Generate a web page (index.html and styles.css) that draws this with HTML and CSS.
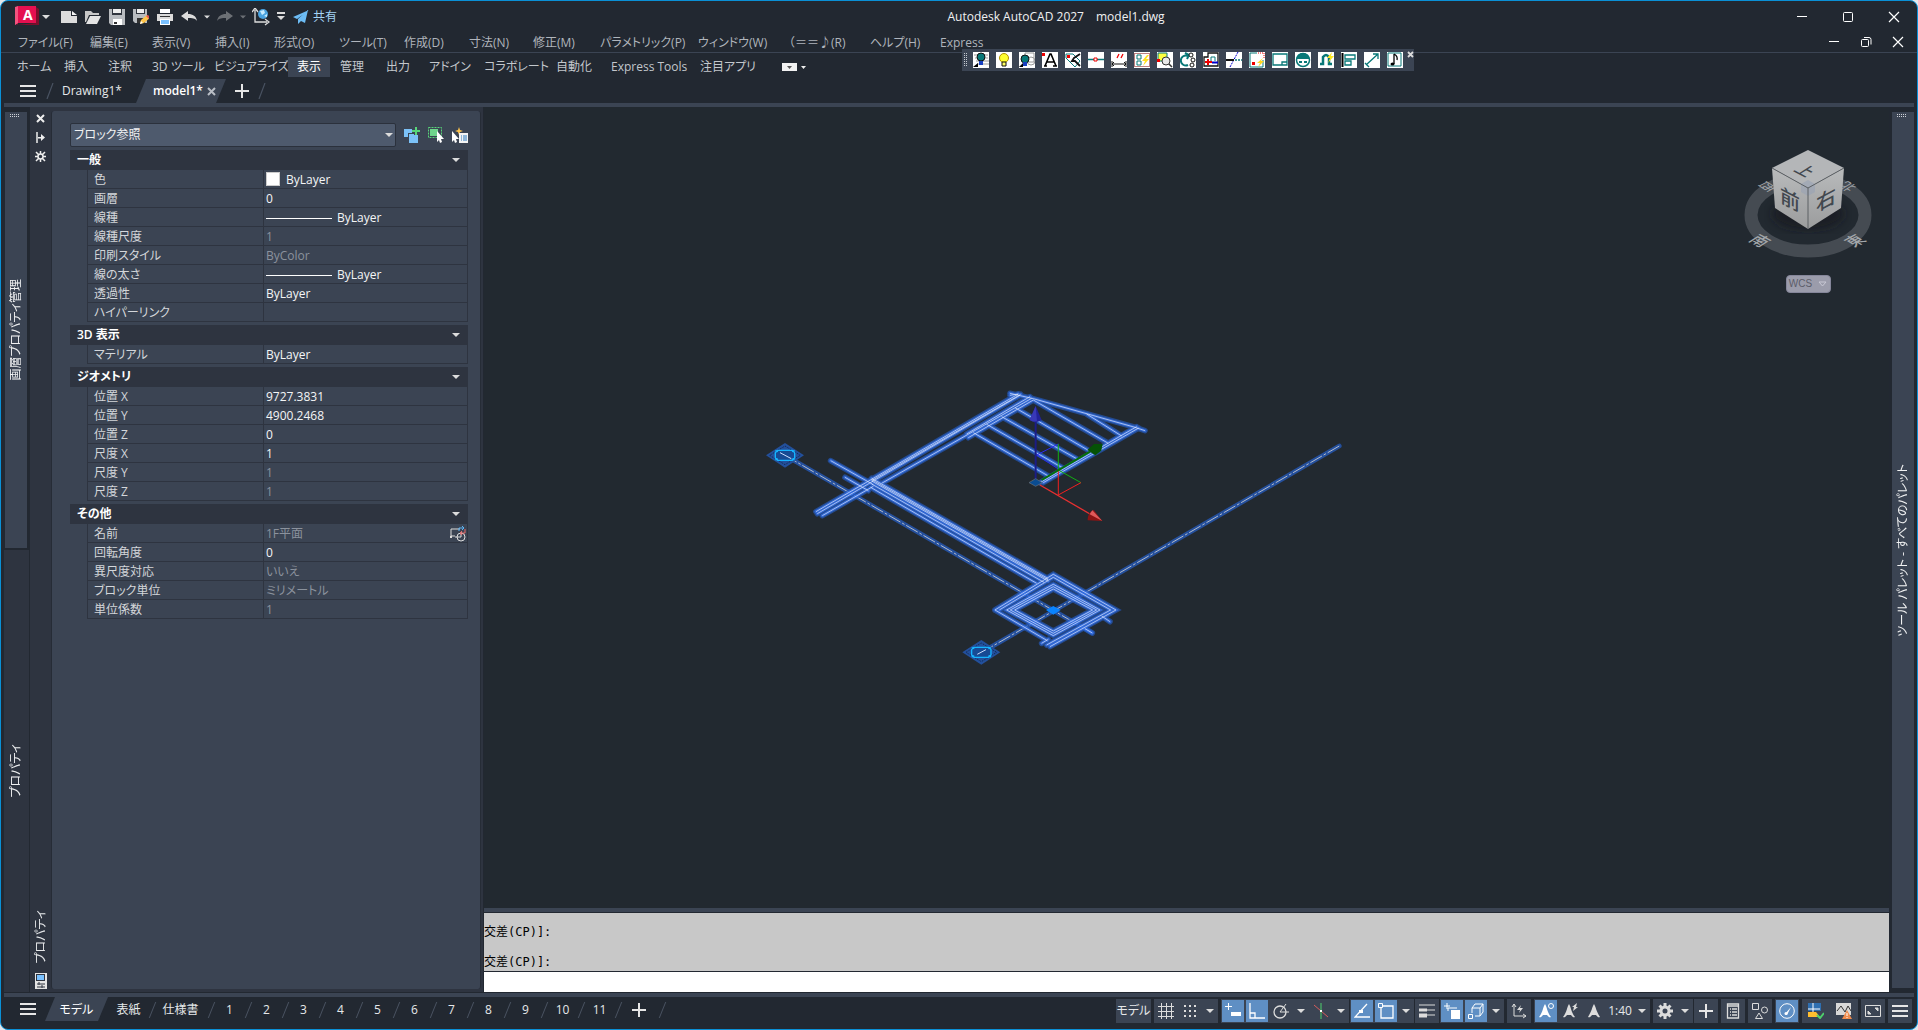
FILE: index.html
```html
<!DOCTYPE html>
<html lang="ja">
<head>
<meta charset="utf-8">
<title>Autodesk AutoCAD 2027 - model1.dwg</title>
<link rel="stylesheet" href="styles.css">
</head>
<body>
<svg class="defs" aria-hidden="true">
  <symbol id="caret" viewBox="0 0 8 8"><path d="M0 2h8L4 6z" fill="#dcdcdc"/></symbol>
  <symbol id="burger" viewBox="0 0 16 16"><path d="M0 3h16M0 8h16M0 13h16" stroke="#e6e6e6" stroke-width="2"/></symbol>
  <symbol id="plus" viewBox="0 0 16 16"><path d="M8 1v14M1 8h14" stroke="#e6e6e6" stroke-width="2"/></symbol>
  <symbol id="slash" viewBox="0 0 8 16"><path d="M1 16L7 0" stroke="#4a5362" stroke-width="1.2"/></symbol>
  <symbol id="close" viewBox="0 0 12 12"><path d="M1 1l10 10M11 1L1 11" stroke="#fff" stroke-width="1.2"/></symbol>
  <symbol id="grip" viewBox="0 0 10 4"><path d="M0 .5h10M0 2.5h10" stroke="#d0d3d8" stroke-dasharray="1 1"/></symbol>
  <symbol id="compass" viewBox="0 0 16 16"><path d="M8 1C6 4 6 8 2 14c2 1 3-1 4-2h4c1 1 2 3 4 2C10 8 10 4 8 1z" fill="#dcdcdc"/></symbol>
</svg>
<div class="app">
  <header class="titlebar">
    <button class="tb logo" aria-label="アプリケーション メニュー"><svg width="24" height="22" viewBox="0 0 24 22"><path d="M0 1L3 4v15l-3-2zM2 19h22v-16l-3-2v16z" fill="#7c0f2c"/><path d="M0 19L3 0h18v17l-3 0H3z" fill="#e51050"/><path d="M0 1l3-1v17l-3 2z" fill="#f2547f"/></svg><b>A</b></button>
    <button class="tb caretbtn first" aria-label="開く"><svg width="8" height="8"><use href="#caret"/></svg></button>
    <button class="tb" aria-label="新規"><svg width="16" height="16" viewBox="0 0 16 16"><path d="M0 2h10v5h6v7H0z" fill="#dcdcdc"/><path d="M11 2l5 4h-5z" fill="#f4f4f4"/></svg></button>
    <button class="tb" aria-label="開く"><svg width="16" height="16" viewBox="0 0 16 16"><path d="M0 2h6l2 2h6v2H4L1 13H0z" fill="#c8c8c8"/><path d="M5 7h11l-4 8H1z" fill="#e4e4e4"/></svg></button>
    <button class="tb" aria-label="上書き保存"><svg width="16" height="16" viewBox="0 0 16 16"><path d="M0 0h16v16H2l-2-2z" fill="#b9bcc0"/><path d="M3 0h10v6H3z" fill="#30353e"/><path d="M4 0h8v4H4z" fill="#eee"/><path d="M4 10h9v6H4z" fill="#fff"/><path d="M5 13h3v2H5z" fill="#333"/></svg></button>
    <button class="tb" aria-label="名前を付けて保存"><svg width="16" height="16" viewBox="0 0 16 16"><path d="M0 0h14v14H2l-2-2z" fill="#b9bcc0"/><path d="M3 0h9v5H3z" fill="#30353e"/><path d="M4 0h7v4H4z" fill="#eee"/><path d="M4 9h8v5H4z" fill="#333"/><path d="M7 15l1-4 6-5 3 3-6 5z" fill="#ffc54a"/><path d="M13 7l2-1 2 2-1 2z" fill="#e25555"/><path d="M7 15l1-3 2 2z" fill="#fff"/></svg></button>
    <button class="tb" aria-label="印刷"><svg width="16" height="16" viewBox="0 0 16 16"><path d="M3 0h10v4H3z" fill="#fff"/><path d="M0 5h16v7H0z" fill="#dcdcdc"/><path d="M3 7h10v1H3z" fill="#333"/><path d="M3 10h10v6H3z" fill="#fff"/><path d="M4 11h8v4H4z" fill="#79c0ff"/></svg></button>
    <button class="tb" aria-label="元に戻す"><svg width="16" height="16" viewBox="0 0 16 16"><path d="M0 7l7-5v3c5 0 8 2 9 7-2-3-5-3-9-3v3z" fill="#dcdcdc"/></svg></button>
    <button class="tb caretbtn" aria-label="履歴"><svg width="6" height="6"><use href="#caret"/></svg></button>
    <button class="tb dim" aria-label="やり直し"><svg width="16" height="16" viewBox="0 0 16 16"><path d="M16 7L9 2v3C4 5 1 7 0 12c2-3 5-3 9-3v3z" fill="#dcdcdc"/></svg></button>
    <button class="tb caretbtn dim" aria-label="やり直し履歴"><svg width="6" height="6"><use href="#caret"/></svg></button>
    <button class="tb" aria-label="UCS"><svg width="18" height="18" viewBox="0 0 18 18"><path d="M3 2v12h12M0 4l3-4 3 4M13 11l4 3-4 3" stroke="#dcdcdc" fill="none" stroke-width="1.3"/><circle cx="11" cy="6" r="5" fill="#4aa3e0"/><path d="M8 3l4-1 1 3-3 2zM12 8l3-2v3z" fill="#c8ecff"/></svg></button>
    <button class="tb caretbtn wide" aria-label="カスタマイズ"><svg width="8" height="9" viewBox="0 0 8 9"><path d="M0 0h8v2H0zM0 4h8L4 8z" fill="#dcdcdc"/></svg></button>
    <button class="tb share"><svg width="16" height="14" viewBox="0 0 16 14"><path d="M16 0L0 7l4 2zM15 0L5 9v5l3-3 4 2z" fill="#6cbcf5"/></svg>共有</button>
    <h1 class="caption"><span>Autodesk AutoCAD 2027</span><span>model1.dwg</span></h1>
    <button class="win" aria-label="最小化"><svg width="12" height="12" viewBox="0 0 12 12"><path d="M1 5.500h10" stroke="#fff"/></svg></button>
    <button class="win" aria-label="最大化"><svg width="12" height="12" viewBox="0 0 12 12"><rect x="1.500" y="1.500" width="9" height="9" rx="1" fill="none" stroke="#fff"/></svg></button>
    <button class="win" aria-label="閉じる"><svg width="12" height="12"><use href="#close"/></svg></button>
  </header>

  <nav class="menubar">
    <div class="menus">
      <a href="#">ファイル(F)</a><a href="#">編集(E)</a><a href="#">表示(V)</a><a href="#">挿入(I)</a><a href="#">形式(O)</a><a href="#">ツール(T)</a><a href="#">作成(D)</a><a href="#">寸法(N)</a><a href="#">修正(M)</a><a href="#">パラメトリック(P)</a><a href="#">ウィンドウ(W)</a><a href="#" class="face">（＝＝♪(R)</a><a href="#">ヘルプ(H)</a><a href="#">Express</a>
    </div>
    <div class="docwin">
      <button aria-label="最小化"><svg width="12" height="12" viewBox="0 0 12 12"><path d="M1 5.500h10" stroke="#fff"/></svg></button>
      <button aria-label="元に戻す"><svg width="12" height="12" viewBox="0 0 12 12"><path d="M4 1.500h5q2 0 2 2v5" fill="none" stroke="#fff"/><rect x="1.500" y="3.500" width="7" height="7" rx="1" fill="none" stroke="#fff"/></svg></button>
      <button aria-label="閉じる"><svg width="12" height="12"><use href="#close"/></svg></button>
    </div>
  </nav>

  <nav class="ribbon">
    <a href="#">ホーム</a><a href="#">挿入</a><a href="#">注釈</a><a href="#">3D ツール</a><a href="#">ビジュアライズ</a><a href="#" class="on">表示</a><a href="#">管理</a><a href="#">出力</a><a href="#">アドイン</a><a href="#">コラボレート</a><a href="#">自動化</a><a href="#">Express Tools</a><a href="#">注目アプリ</a>
    <button class="ribbonmode" aria-label="リボン表示"><svg width="24" height="8" viewBox="0 0 24 8"><path d="M0 0h15v8H0z" fill="#f2f2f2"/><path d="M5 3h5L7.500 6z" fill="#555"/><path d="M19 3h5l-2.500 3z" fill="#eee"/></svg></button>
  </nav>

  <div class="floatbar">
    <svg class="dots" width="4" height="14" viewBox="0 0 4 14"><path d="M.5 0v14M2.500 0v14" stroke="#c8ccd2" stroke-dasharray="1 1"/></svg>
    <button aria-label="画層"><svg viewBox="0 0 16 16"><path d="M1 3h14M2 6h13M3 9h13M4 12h12" stroke="#999"/><circle cx="8" cy="5" r="4" fill="#087878" stroke="#111"/><path d="M6 9h4v4H6z" fill="#1840c0"/><path d="M0 15l5-4v4z" fill="#000"/></svg></button>
    <button aria-label="画層表示"><svg viewBox="0 0 16 16"><circle cx="8" cy="6" r="4.500" fill="#ffff30" stroke="#b09000"/><path d="M6 10h4v4H6z" fill="#ffff60" stroke="#111"/></svg></button>
    <button aria-label="画層選択"><svg viewBox="0 0 16 16"><path d="M6 1h9v9H6z" fill="none" stroke="#999"/><circle cx="12" cy="9" r="4" fill="none" stroke="#999"/><circle cx="6" cy="7" r="4" fill="#087878" stroke="#111"/><path d="M4 10h4v4H4z" fill="#1840c0"/><path d="M0 15l4-4v4z" fill="#000"/></svg></button>
    <button aria-label="文字"><svg viewBox="0 0 16 16"><path d="M3 14L8 2h1l5 12M5 10h7M2 14h3M11 14h4" fill="none" stroke="#000" stroke-width="1.600"/><path d="M0 1h3v3H0z" fill="#e00"/></svg></button>
    <button aria-label="タグ"><svg viewBox="0 0 16 16"><path d="M1 2h7l7 7-5 6-9-9z" fill="none" stroke="#087878"/><path d="M15 2l-6 4-2 3 3 0 5 5" fill="none" stroke="#111" stroke-width="1.800"/><path d="M2 3h3v3H2z" fill="#e00"/></svg></button>
    <button aria-label="点"><svg viewBox="0 0 16 16"><path d="M0 7.500h16" stroke="#087878" stroke-width="1.500"/><path d="M6 6h3v3H6z" fill="#fff" stroke="#e00"/></svg></button>
    <button aria-label="寸法"><svg viewBox="0 0 16 16"><path d="M6 6l2-4M10 6l2-4" stroke="#e00" stroke-width="1.300"/><path d="M1 12h14M3 10l-2 2 2 2M13 10l2 2-2 2M1 9v6M15 9v6" fill="none" stroke="#111"/></svg></button>
    <button aria-label="クイック選択"><svg viewBox="0 0 16 16"><path d="M.5 1.500h15v13H.5z" fill="none" stroke="#700" stroke-dasharray="1 1"/><path d="M3 3h4v4H3zM3 9h4v4H3z" fill="none" stroke="#087878"/><path d="M13 3L8 9h3l-2 5 6-7h-3l3-4z" fill="#ffe020"/></svg></button>
    <button aria-label="ズーム"><svg viewBox="0 0 16 16"><path d="M1 1h9v8H1z" fill="#ffff40" stroke="#087878"/><circle cx="9" cy="9" r="4" fill="#e9e9e9" stroke="#333"/><path d="M12 12l3 3" stroke="#333" stroke-width="1.500"/><path d="M0 7h3v3H0z" fill="#e00"/></svg></button>
    <button aria-label="回転"><svg viewBox="0 0 16 16"><path d="M8 13a5 5 0 1 1 0-9M5 1l4 2-2 4" fill="none" stroke="#087878" stroke-width="2"/><circle cx="11" cy="3" r="2" fill="#fff" stroke="#111"/><circle cx="13" cy="8" r="2" fill="#fff" stroke="#111"/><circle cx="12" cy="13" r="2" fill="#fff" stroke="#111"/></svg></button>
    <button aria-label="追加"><svg viewBox="0 0 16 16"><path d="M1 5h4V1h10v13H1z" fill="none" stroke="#111" stroke-width="1.300"/><path d="M5 7v6M2 10h7" stroke="#e00" stroke-width="2"/><path d="M9 10.500h6" stroke="#00c" stroke-width="2"/><path d="M8 9V5h4v4" fill="none" stroke="#087878"/></svg></button>
    <button aria-label="トリム"><svg viewBox="0 0 16 16"><path d="M4 15l8-15" stroke="#00c" stroke-dasharray="2 1"/><path d="M0 8h8" stroke="#111" stroke-width="2"/><path d="M9 8h7" stroke="#087878" stroke-width="1.500" stroke-dasharray="2 1"/></svg></button>
    <button aria-label="ハッチ"><svg viewBox="0 0 16 16"><path d="M8 1H1v14h13V8" fill="none" stroke="#087878"/><path d="M9 1h6v6" fill="none" stroke="#e00" stroke-dasharray="1 1"/><path d="M3 10h3v3H3z" fill="#e00"/><path d="M14 6L8 11h3l-2 4 6-6h-3z" fill="#ffd820"/></svg></button>
    <button aria-label="ビューポート"><svg viewBox="0 0 16 16"><path d="M1 2h14v11H1zM10 13v-3h5" fill="none" stroke="#087878" stroke-width="1.300"/></svg></button>
    <button aria-label="顔"><svg viewBox="0 0 16 16"><circle cx="8" cy="8" r="6.500" fill="#fff" stroke="#087878" stroke-width="1.500"/><path d="M1.500 7a6.500 6 0 0 1 13 0z" fill="#087878"/><path d="M4 9h3v2H4zM9 9h3v2H9z" fill="#087878"/></svg></button>
    <button aria-label="リセット"><svg viewBox="0 0 16 16"><path d="M2 12h3V5q3-4 6 0v7h3" fill="none" stroke="#087878" stroke-width="2.500"/><path d="M14 0l-5 6h3l-2 5 6-7h-3z" fill="#ffe820"/></svg></button>
    <button aria-label="位置合わせ"><svg viewBox="0 0 16 16"><path d="M1.500 1v14" stroke="#000" stroke-width="2"/><path d="M4 3h10v4H4zM4 9h6v4H4z" fill="none" stroke="#087878" stroke-width="1.300"/></svg></button>
    <button aria-label="引出線"><svg viewBox="0 0 16 16"><path d="M2 13L14 2M9 2h5v5M1 11l4 4" fill="none" stroke="#087878" stroke-width="1.300"/></svg></button>
    <button aria-label="音符"><svg viewBox="0 0 16 16"><path d="M1 1h13v13H1z" fill="none" stroke="#087878"/><path d="M7 2v10M7 2q4 2 3 6" fill="none" stroke="#000" stroke-width="1.300"/><ellipse cx="5.500" cy="12" rx="2" ry="1.500"/></svg></button>
    <button class="x" aria-label="閉じる"><svg viewBox="0 0 7 7"><path d="M1 1l5 5M6 1L1 6" stroke="#ddd" stroke-width="1.800"/></svg></button>
  </div>

  <nav class="filetabs">
    <button class="menu" aria-label="ファイル タブ メニュー"><svg width="16" height="16"><use href="#burger"/></svg></button>
    <svg width="8" height="16"><use href="#slash"/></svg>
    <a href="#" class="doc">Drawing1*</a>
    <a href="#" class="doc on">model1*<svg width="9" height="9" viewBox="0 0 9 9"><path d="M1 1l7 7M8 1L1 8" stroke="#b9bec6" stroke-width="2"/></svg></a>
    <button class="add" aria-label="新規図面"><svg width="16" height="16"><use href="#plus"/></svg></button>
    <svg width="8" height="16"><use href="#slash"/></svg>
  </nav>
  <div class="strip"></div>

  <main class="work">
    <aside class="rail">
      <button class="railtab top"><svg width="10" height="4"><use href="#grip"/></svg><span class="vert">画層プロパティ管理</span></button>
      <button class="railtab low"><span class="vert">プロパティ</span></button>
    </aside>

    <aside class="palette">
      <div class="handle">
        <button aria-label="閉じる"><svg width="9" height="9" viewBox="0 0 9 9"><path d="M1 1l7 7M8 1L1 8" stroke="#eee" stroke-width="2"/></svg></button>
        <button aria-label="自動的に隠す"><svg width="9" height="11" viewBox="0 0 9 11"><path d="M1 0v11" stroke="#eee" stroke-width="1.500"/><path d="M2 5h3V2l4 3.500L5 9V6.500H2z" fill="#eee"/></svg></button>
        <button aria-label="プロパティ設定"><svg width="11" height="11" viewBox="0 0 11 11"><circle cx="5.500" cy="5.500" r="2.500" fill="none" stroke="#eee" stroke-width="1.500"/><path d="M5.500 0v3M5.500 8v3M0 5.500h3M8 5.500h3M1 1l2.500 2.500M7.500 7.500L10 10M10 1L7.500 3.500M3.500 7.500L1 10" stroke="#eee" stroke-width="1.500"/></svg></button>
        <span class="vert name">プロパティ</span>
        <svg width="12" height="16" viewBox="0 0 12 16"><path d="M0 0h12v16H0z" fill="#e4e4e4"/><rect x="1.500" y="1.500" width="8" height="6" fill="#79c0ff" stroke="#2e3440"/><path d="M2 11h8M2 14h8M4 9v3M7 12v3" stroke="#2e3440"/></svg>
      </div>
      <div class="props">
        <div class="pick">
          <div class="combo"><select aria-label="オブジェクト タイプ"><option>ブロック参照</option></select><svg width="8" height="8"><use href="#caret"/></svg></div>
          <button aria-label="PICKADD 切り替え"><svg width="16" height="16" viewBox="0 0 16 16"><path d="M0 2h8v8H0z" fill="#7cc2f8"/><path d="M4 6h11v10H4z" fill="#3b4453"/><path d="M5 7h9v9H5z" fill="#7cc2f8"/><path d="M12 0v8M8 4h8" stroke="#3b4453" stroke-width="4"/><path d="M12 0v8M8 4h8" stroke="#58d67a" stroke-width="2"/></svg></button>
          <button aria-label="オブジェクトを選択"><svg width="16" height="16" viewBox="0 0 16 16"><path d="M.5.500h13v10H.5z" fill="none" stroke="#58d67a" stroke-dasharray="2 1"/><path d="M2 2h8v7H2z" fill="#6fd58c"/><path d="M9 4v11l2-2 1 3 2-1-1-3h3z" fill="#fff"/></svg></button>
          <button aria-label="クイック選択"><svg width="16" height="16" viewBox="0 0 16 16"><path d="M0 4v11l2-2 1 3 2-1-1-3h3z" fill="#fff"/><path d="M7 0l1 3 3 1-3 1-1 3-1-3-3-1 3-1z" fill="#ffc44d"/><path d="M7 6h9v10H7z" fill="#f4f4f4"/><path d="M9 9h1M11 9h4M9 11h1M11 11h4M9 13h1M11 13h4" stroke="#2a7bc0"/></svg></button>
        </div>
        <section>
          <h2>一般<svg width="8" height="8"><use href="#caret"/></svg></h2>
          <table>
            <tr><th>色</th><td><i class="swatch"></i>ByLayer</td></tr>
            <tr><th>画層</th><td>0</td></tr>
            <tr><th>線種</th><td><i class="line"></i>ByLayer</td></tr>
            <tr><th>線種尺度</th><td class="ro">1</td></tr>
            <tr><th>印刷スタイル</th><td class="ro">ByColor</td></tr>
            <tr><th>線の太さ</th><td><i class="line"></i>ByLayer</td></tr>
            <tr><th>透過性</th><td>ByLayer</td></tr>
            <tr><th>ハイパーリンク</th><td></td></tr>
          </table>
        </section>
        <section>
          <h2>3D 表示<svg width="8" height="8"><use href="#caret"/></svg></h2>
          <table><tr><th>マテリアル</th><td>ByLayer</td></tr></table>
        </section>
        <section>
          <h2>ジオメトリ<svg width="8" height="8"><use href="#caret"/></svg></h2>
          <table>
            <tr><th>位置 X</th><td>9727.3831</td></tr>
            <tr><th>位置 Y</th><td>4900.2468</td></tr>
            <tr><th>位置 Z</th><td>0</td></tr>
            <tr><th>尺度 X</th><td>1</td></tr>
            <tr><th>尺度 Y</th><td class="ro">1</td></tr>
            <tr><th>尺度 Z</th><td class="ro">1</td></tr>
          </table>
        </section>
        <section>
          <h2>その他<svg width="8" height="8"><use href="#caret"/></svg></h2>
          <table>
            <tr><th>名前</th><td class="ro"><div class="withicon">1F平面<svg width="16" height="16" viewBox="0 0 16 16"><path d="M1 10V3h9M1 10h4" fill="none" stroke="#dcdcdc"/><path d="M0 10h2v2H0z" fill="#dcdcdc"/><circle cx="11" cy="11" r="4" fill="none" stroke="#dcdcdc"/><path d="M5 11h6V6" fill="none" stroke="#dcdcdc"/><path d="M9 5V2h5M12 0l2 2-2 2" fill="none" stroke="#5fb4f5"/><path d="M15 3v4h-5M12 5l-2 2 2 2" fill="none" stroke="#e86868"/></svg></div></td></tr>
            <tr><th>回転角度</th><td>0</td></tr>
            <tr><th>異尺度対応</th><td class="ro">いいえ</td></tr>
            <tr><th>ブロック単位</th><td class="ro">ミリメートル</td></tr>
            <tr><th>単位係数</th><td class="ro">1</td></tr>
          </table>
        </section>
      </div>
    </aside>

    <div class="center">
      <div class="canvas">
        <svg class="drawing" viewBox="484 107 1405 801" preserveAspectRatio="xMidYMid meet">
          <defs>
            <g id="solid" fill="none">
              <path d="M228 425L835 72M232 431L840 76M395 332L842 73M425 340L875 85M680 192L870 80M247 437L400 349M685 203L880 90"/>
              <path d="M810 70L880 86L1185 172L1215 182M810 76L835 72M880 90L1105 220M825 113L1052 245M785 140L1010 266M740 163L967 293M700 188L925 318M1040 132L1145 198"/>
              <path d="M900 338L1190 170M910 338L1196 174"/>
              <path d="M272 272L400 344M315 322L385 362"/>
              <path d="M395 325L925 626M395 329L925 630M395 333L925 634M395 342L912 637M392 352L890 640"/>
              <path d="M765 720L940 613L1128 720L930 830M765 720L922 812M778 720L940 622L1112 720L920 825M905 820L925 808"/>
              <path d="M800 720L940 643L1080 720L940 797zM811 720L940 650L1070 720L940 790zM824 720L940 657L1058 720L940 783z"/>
              <path d="M1085 738L1110 755M1035 776L1057 789"/>
            </g>
            <g id="axes" fill="none"><path d="M135 256L1055 788M724 848L1798 228"/></g>
            <g id="bubble"><path class="tag" d="M-57 0L0-37L57 0L0 37z"/><path class="tagline" d="M-46 0L0-28L46 0L0 28z"/><path class="ring" d="M-29-8L-22-15H22L29-8V8L22 15H-22L-29 8zM-29-14l8 3M29-14l-8 3M-29 14l8-3M29 14l-8-3"/></g>
          </defs>
          <g transform="translate(740 370) scale(.3333)">
            <use href="#axes" class="axisglow"/><use href="#axes" class="axiscore"/>
            <use href="#solid" class="glow"/><use href="#solid" class="halo"/><use href="#solid" class="core"/>
            <use href="#bubble" x="135" y="256"/><use href="#bubble" x="724" y="847"/>
            <path d="M120 248l34 18M712 853l26-14" stroke="#cfe0ff" stroke-width="3"/>
            <path d="M940 708l22 12-22 14-22-14z" fill="#0a84ff"/>
            <g fill="none" stroke-width="3">
              <path d="M955 222L890 255L955 297" stroke="#2a2af0"/>
              <path d="M955 222V300L1023 338" stroke="#12b012"/>
              <path d="M955 375L1023 338M955 300V375" stroke="#f02020"/>
              <path d="M887 330V150" stroke="#1c1c86" stroke-width="6"/>
              <path d="M905 330L1050 245" stroke="#067006" stroke-width="6"/>
              <path d="M900 345L1050 432" stroke="#e83030" stroke-width="4"/>
            </g>
            <path d="M887 108l18 42q-18 12-36 0z" fill="#22229a"/>
            <path d="M887 108l4 46q-12 2-22-4z" fill="#3838b8"/>
            <path d="M1088 222l-4 20-18 14-24-16 20-18z" fill="#065206"/>
            <path d="M1087 453l-44-2q0-24 18-32z" fill="#8a1414"/>
            <path d="M1087 453l-38-20 8-12z" fill="#e05a5a"/>
            <path d="M887 326l20 12-20 11-20-11z" fill="#0a4c92" stroke="#6c7278" stroke-width="2"/>
          </g>
        </svg>
        <div class="viewcube">
          <svg width="150" height="130" viewBox="1733 140 150 130">
            <defs>
              <linearGradient id="side" x1="0" y1="0" x2="0" y2="1"><stop offset="0" stop-color="#b9bbbc"/><stop offset="1" stop-color="#9b9c9d"/></linearGradient>
              <filter id="soft"><feGaussianBlur stdDeviation="4"/></filter>
            </defs>
            <ellipse cx="1808" cy="215" rx="57" ry="36" fill="none" stroke="#454b52" stroke-width="13"/>
            <g class="dir">
              <text transform="translate(1768 187) rotate(152) skewX(30)">西</text>
              <text transform="translate(1847 187) rotate(208) skewX(-30)">北</text>
              <text transform="translate(1761 240) rotate(28) skewX(-30)" class="near">南</text>
              <text transform="translate(1854 240) rotate(-28) skewX(30)" class="near">東</text>
            </g>
            <ellipse cx="1808" cy="214" rx="36" ry="16" fill="#15191f" opacity=".6" filter="url(#soft)"/>
            <path d="M1772 168L1808 188V229L1775 208z" fill="url(#side)"/>
            <path d="M1844 168L1808 188V229L1841 208z" fill="url(#side)"/>
            <path d="M1808 150L1844 168L1808 188L1772 168z" fill="#b4b6b8"/>
            <path d="M1808 180l7 4v8l-7 4-7-4v-8z" fill="#98a2b4" opacity=".6"/>
            <path d="M1772 168L1808 188L1844 168M1808 188V229" fill="none" stroke="#5c6064" stroke-width="1"/>
            <g class="face-label">
              <text transform="translate(1806 170) rotate(28) skewX(-30)" class="top">上</text>
              <text transform="translate(1790 198) skewY(28)">前</text>
              <text transform="translate(1826 198) skewY(-28)">右</text>
            </g>
          </svg>
          <button class="wcs">WCS<svg width="9" height="7" viewBox="0 0 9 7"><path d="M1 1h7L4.500 5z" fill="none" stroke="#c8c8d4"/></svg></button>
        </div>
      </div>
      <div class="command">
        <div class="history"><p>交差(CP)]:</p><p>交差(CP)]:</p></div>
        <input type="text" aria-label="コマンド">
      </div>
    </div>

    <aside class="rightrail">
      <button><svg width="10" height="4"><use href="#grip"/></svg><span class="vert">ツール パレット - すべてのパレット</span></button>
    </aside>
  </main>
  <div class="strip bottom"></div>

  <footer class="footer">
    <nav class="layouts">
      <button class="menu" aria-label="レイアウト メニュー"><svg width="16" height="16"><use href="#burger"/></svg></button>
      <a href="#" class="model">モデル</a>
      <a href="#" class="sheet">表紙</a><a href="#" class="sheet three">仕様書</a><a href="#" class="num">1</a><a href="#" class="num">2</a><a href="#" class="num">3</a><a href="#" class="num">4</a><a href="#" class="num">5</a><a href="#" class="num">6</a><a href="#" class="num">7</a><a href="#" class="num">8</a><a href="#" class="num">9</a><a href="#" class="num">10</a><a href="#" class="num">11</a>
      <button class="num add" aria-label="新規レイアウト"><svg width="16" height="16"><use href="#plus"/></svg></button>
    </nav>
    <div class="status">
      <div class="grp"><button class="space">モデル</button></div>
      <div class="grp">
        <button aria-label="グリッド"><svg viewBox="0 0 16 16"><path d="M3.500 0v16M8.500 0v16M13.500 0v16M0 3.500h16M0 8.500h16M0 13.500h16" stroke="#dcdcdc"/></svg></button>
        <button aria-label="スナップ"><svg viewBox="0 0 16 16"><path d="M2 3h14M2 8h14M2 13h14" stroke="#dcdcdc" stroke-width="2" stroke-dasharray="2 3"/></svg></button>
        <button class="dd" aria-label="スナップ設定"><svg><use href="#caret"/></svg></button>
      </div>
      <div class="tight">
        <div class="grp">
          <button class="on" aria-label="ダイナミック入力"><svg viewBox="0 0 16 16"><path d="M3.500 0v7M0 3.500h7" stroke="#fff"/><path d="M6 9h10v4H6z" fill="#fff"/></svg></button>
          <button class="on" aria-label="直交モード"><svg viewBox="0 0 16 16"><path d="M1 0v15h15M1 10h5v5" fill="none" stroke="#fff" stroke-width="1.300"/></svg></button>
          <button aria-label="極トラッキング"><svg viewBox="0 0 16 16"><circle cx="7" cy="9" r="6" fill="none" stroke="#dcdcdc" stroke-width="1.300"/><path d="M7 9h9M7 9l6-8" stroke="#dcdcdc"/></svg></button>
          <button class="dd" aria-label="極設定"><svg><use href="#caret"/></svg></button>
          <button aria-label="アイソメ"><svg viewBox="0 0 16 16"><path d="M1 2l14 12" stroke="#d85c5c"/><path d="M8 0v16" stroke="#4ed06c"/><path d="M7 7h2v2H7z" fill="#fff"/></svg></button>
          <button class="dd" aria-label="アイソメ設定"><svg><use href="#caret"/></svg></button>
        </div>
        <div class="grp">
          <button class="on" aria-label="オブジェクト スナップ トラッキング"><svg viewBox="0 0 16 16"><path d="M13 1L1 14h15" fill="none" stroke="#fff" stroke-width="1.300"/><path d="M5 7h4v3H5z" fill="#fff"/></svg></button>
          <button class="on" aria-label="オブジェクト スナップ"><svg viewBox="0 0 16 16"><path d="M3 3h12v12H3z" fill="none" stroke="#fff" stroke-width="1.300"/><path d="M.5.500h4v4h-4z" fill="#5f8fc4" stroke="#fff"/></svg></button>
          <button class="dd" aria-label="スナップ一覧"><svg><use href="#caret"/></svg></button>
        </div>
        <div class="grp"><button aria-label="線の太さ"><svg viewBox="0 0 16 16"><path d="M0 2h16M8 7h8M8 12h8" stroke="#dcdcdc"/><path d="M0 7h8" stroke="#dcdcdc" stroke-width="3"/><path d="M0 12.500h8" stroke="#dcdcdc" stroke-width="4"/></svg></button></div>
        <div class="grp">
          <button class="on" aria-label="選択の循環"><svg viewBox="0 0 16 16"><path d="M3 0v6M0 3h6" stroke="#fff"/><path d="M4 8V5h9" fill="none" stroke="#fff"/><path d="M7 7h9v9H7z" fill="#fff"/></svg></button>
          <button class="on" aria-label="3D オブジェクト スナップ"><svg viewBox="0 0 16 16"><path d="M4 5l3-4h8v8l-3 4H7M4 5h8v8M12 5l3-4M4 5v5" fill="none" stroke="#fff"/><path d="M.5 11.500h4v4h-4z" fill="#5f8fc4" stroke="#fff"/></svg></button>
          <button class="dd" aria-label="3D 設定"><svg><use href="#caret"/></svg></button>
        </div>
      </div>
      <div class="grp"><button aria-label="ダイナミック UCS"><svg viewBox="0 0 16 16"><path d="M3 1v12h12M1 4l2-3 2 3M12 11l3 2-3 2" fill="none" stroke="#dcdcdc"/><path d="M10 2L6 7h3l-1 3 4-5h-3z" fill="#dcdcdc"/></svg></button></div>
      <div class="grp">
        <button class="on" aria-label="注釈表示"><svg viewBox="0 0 16 16"><path d="M7 1C5 4 5 9 1 14c2 1 3-1 4-2h4c1 1 2 3 4 2C9 9 9 4 7 1z" fill="#fff"/><circle cx="13" cy="3" r="2.500" fill="none" stroke="#fff"/></svg></button>
        <button aria-label="自動尺度"><svg viewBox="0 0 16 16"><path d="M7 1C5 4 5 9 1 14c2 1 3-1 4-2h4c1 1 2 3 4 2C9 9 9 4 7 1z" fill="#dcdcdc"/><path d="M15 0l-5 4h2l-1 4 5-4h-2z" fill="#dcdcdc"/></svg></button>
        <button aria-label="注釈尺度"><svg><use href="#compass"/></svg></button>
        <button class="scale">1:40</button>
        <button class="dd" aria-label="尺度一覧"><svg><use href="#caret"/></svg></button>
      </div>
      <div class="tight">
        <div class="grp">
          <button aria-label="ワークスペース"><svg viewBox="0 0 16 16"><circle cx="8" cy="8" r="4" fill="none" stroke="#dcdcdc" stroke-width="3"/><path d="M8 0v3M8 13v3M0 8h3M13 8h3M2.500 2.500l2 2M11.500 11.500l2 2M13.500 2.500l-2 2M4.500 11.500l-2 2" stroke="#dcdcdc" stroke-width="3"/></svg></button>
          <button class="dd" aria-label="ワークスペース一覧"><svg><use href="#caret"/></svg></button>
        </div>
        <div class="grp"><button aria-label="注釈モニター"><svg><use href="#plus"/></svg></button></div>
      </div>
      <div class="grp"><button aria-label="クイック プロパティ"><svg viewBox="0 0 16 16"><path d="M2.500 1h11v14h-11zM2 3h12" fill="none" stroke="#dcdcdc" stroke-width="1.300"/><path d="M5 6h1M7 6h5M5 9h1M7 9h5M5 12h1M7 12h5" stroke="#dcdcdc" stroke-width="1.500"/></svg></button></div>
      <div class="grp"><button aria-label="オブジェクト選択"><svg viewBox="0 0 16 16"><path d="M.5.500h6v6h-6zM7 10l3.500 5.500h-7z" fill="none" stroke="#dcdcdc"/><circle cx="12.500" cy="7" r="3" fill="none" stroke="#dcdcdc"/></svg></button></div>
      <div class="grp"><button class="on" aria-label="グラフィックス パフォーマンス"><svg viewBox="0 0 16 16"><circle cx="8" cy="8" r="7.300" fill="none" stroke="#fff"/><path d="M6 11l6-7-4 8z" fill="#fff"/><circle cx="7" cy="10.500" r="1.500" fill="#fff"/></svg></button></div>
      <div class="grp double">
        <button aria-label="座標系"><svg viewBox="0 0 16 16"><path d="M0 0h13v8H0z" fill="#2f6fb0"/><path d="M0 9h8l4 5H0z" fill="#ffbd2e"/><path d="M0 6h12M5 0v9" stroke="#fff"/><path d="M9 12l3 3 4-5" fill="none" stroke="#4ed06c" stroke-width="2"/></svg></button>
        <button aria-label="システム変数モニター"><svg viewBox="0 0 16 16"><path d="M0 0h15v12H0z" fill="#d8d8d8"/><path d="M1 8l4-5 4 6 3-6 3 5" fill="none" stroke="#333"/><path d="M11 7l5 9H6z" fill="#f08a4b"/><path d="M11 10v3M11 14v1" stroke="#fff"/></svg></button>
      </div>
      <div class="grp"><button aria-label="フルスクリーン"><svg viewBox="0 0 16 16"><path d="M.5 2.500h15v11H.5z" fill="none" stroke="#dcdcdc"/><path d="M10 5h3v3zM3 11V8l3 3z" fill="#dcdcdc" stroke="#dcdcdc"/></svg></button></div>
      <div class="grp"><button aria-label="カスタマイズ"><svg><use href="#burger"/></svg></button></div>
    </div>
  </footer>
</div>
</body>
</html>
```
FILE: styles.css
```css
:root {
  --bg: #222831;
  --panel: #3b4453;
  --dark: #2e3440;
  --accent: #0a90d6;
  --active: #5f8fc4;
}
* { box-sizing: border-box; }
body {
  margin: 0;
  background: #e4e8ec;
  color: #e6e8ea;
  font: 12px/16px "Open Sans", "Noto Sans CJK JP", sans-serif;
  font-feature-settings: "palt";
}
a { color: inherit; text-decoration: none; white-space: nowrap; }
button {
  margin: 0; padding: 0; border: 0; background: none;
  color: inherit; font: inherit; font-feature-settings: inherit; white-space: nowrap;
  display: flex; align-items: center; justify-content: center;
}
svg { display: block; flex: none; }
.defs { position: absolute; width: 0; height: 0; }

.app {
  position: relative;
  min-height: 100vh;
  display: flex; flex-direction: column;
  background: var(--bg);
  border: 1px solid var(--accent);
  border-radius: 8px;
  overflow: hidden;
}

/* title bar */
.titlebar { display: flex; align-items: center; height: 31px; padding-left: 14px; }
.tb { width: 24px; height: 24px; }
.logo { position: relative; }
.logo b { position: absolute; left: 8px; top: 1px; font-size: 14px; line-height: 18px; color: #fff; }
.caretbtn { width: 12px; }
.caretbtn.first { width: 18px; padding-right: 4px; }
.caretbtn.wide { width: 16px; }
.dim { opacity: .4; }
.share { width: auto; gap: 4px; padding-left: 4px; color: #a4d3f5; }
.caption { flex: 1; margin: 0; padding-right: 4px; display: flex; justify-content: center; gap: 12px; font-size: 12px; line-height: 16px; font-weight: 400; color: #f0f1f2; }
.win { width: 46px; height: 30px; }

.menubar { display: flex; justify-content: space-between; height: 21px; border-bottom: 1px solid var(--panel); color: #b0b5bc; }
.menus { display: grid; align-items: end; padding: 0 0 1px 17px; grid-template-columns: 72px 62px 63px 59px 65px 65px 65px 64px 67px 98px 85px 87px 70px 60px; }
.face { font-feature-settings: normal; }
.docwin { display: flex; padding-right: 3px; }
.docwin button { width: 32px; }

.ribbon {
  display: grid; height: 26px; padding: 4px 0 2px 6px; color: #c3c7cc;
  grid-template-columns: 47px 44px 44px 62px 84px 42px 46px 43px 55px 72px 55px 89px 70px 60px;
}
.ribbon a { padding: 2px 0 2px 10px; }
.ribbon .on { padding-left: 9px; background: var(--panel); color: #fff; }
.ribbonmode { justify-content: flex-end; padding-right: 14px; }

.floatbar {
  position: absolute; left: 961px; top: 48px;
  display: flex; align-items: center; gap: 7px;
  height: 22px; padding: 0 0 0 2px; background: var(--panel);
}
.floatbar .dots { margin-right: -2px; }
.floatbar button { width: 16px; height: 16px; background: #fff; }
.floatbar button svg { width: 16px; height: 16px; }
.floatbar .x { width: 7px; height: 7px; align-self: flex-start; margin: 2px 0 0 -3px; background: none; }
.floatbar .x svg { width: 7px; height: 7px; }

.filetabs { display: flex; align-items: center; height: 24px; padding-left: 19px; }
.menu { width: 16px; height: 16px; }
.filetabs .menu { margin-right: 10px; }
.doc { width: 82px; padding-left: 8px; }
.doc.on {
  display: flex; align-items: center; gap: 4px; width: 90px; height: 24px; padding-left: 17px;
  background: var(--panel); color: #fff; font-weight: 600;
  clip-path: polygon(10px 0, 100% 0, calc(100% - 10px) 100%, 0 100%);
}
.filetabs .add { width: 32px; }
.strip { height: 4px; margin: 0 3px; background: var(--panel); }
.strip.bottom { height: 5px; border-top: 1px solid var(--bg); }

/* work area */
.work { flex: 1; display: grid; grid-template-columns: 26px 454px minmax(0, 1fr) 26px; margin: 0 1px 0 3px; min-height: 640px; }
.vert { writing-mode: vertical-rl; text-orientation: sideways; transform: rotate(180deg); white-space: nowrap; }
.rail { display: flex; flex-direction: column; gap: 2px; padding-top: 5px; border-right: 1px solid var(--bg); }
.railtab { position: relative; color: #f0f1f2; }
.railtab.top { flex: 436; margin: 0 2px 0 1px; background: var(--panel); }
.railtab.low { flex: 442; padding-right: 2px; background: var(--dark); }
.railtab svg, .rightrail svg { position: absolute; top: 2px; left: 5px; }

.palette { display: flex; background: var(--dark); padding: 2px 2px 3px 0; border-right: 1px solid var(--bg); }
.handle { width: 21px; display: flex; flex-direction: column; align-items: center; }
.handle button { width: 20px; height: 19px; }
.handle .name { margin-top: auto; margin-bottom: 10px; }
.props { flex: 1; margin-top: 2px; padding: 12px 12px 12px 18px; background: var(--panel); border: 1px solid #262c36; border-width: 0 1px; border-radius: 3px; }
.pick { display: flex; align-items: center; gap: 8px; margin-bottom: 3px; }
.combo { position: relative; flex: 1; }
.combo select {
  appearance: none; display: block; width: 100%; height: 24px; padding: 0 20px 0 3px;
  background: #4e5a6d; border: 1px solid #2b313c; border-radius: 2px;
  color: #f0f1f2; font: inherit; font-feature-settings: inherit;
}
.combo svg { position: absolute; right: 3px; top: 8px; }
section { margin-bottom: 3px; }
h2 {
  display: flex; align-items: center; justify-content: space-between;
  height: 20px; margin: 0; padding: 0 8px 0 7px; background: var(--dark);
  color: #fff; font-size: 12px; font-weight: 600; line-height: 20px;
}
table { width: calc(100% - 17px); margin-left: 17px; border-spacing: 0; table-layout: fixed; border-left: 1px solid var(--dark); border-right: 1px solid var(--dark); }
th, td { height: 19px; padding: 2px 0 0; border-bottom: 1px solid var(--dark); line-height: 16px; text-align: left; font-weight: 400; }
th { width: 175px; padding-left: 6px; color: #d3d6da; }
td { padding-left: 2px; border-left: 1px solid var(--dark); color: #f4f5f6; }
.ro { color: #8b929d; }
.swatch { display: inline-block; width: 14px; height: 14px; margin-right: 6px; background: #fff; border: 1px solid #ccc; vertical-align: top; }
.line { display: inline-block; width: 66px; height: 1px; margin-right: 5px; background: #fff; vertical-align: middle; }
.withicon { display: flex; justify-content: space-between; padding-right: 1px; }

.center { display: flex; flex-direction: column; min-width: 0; padding-right: 1px; }
.canvas { position: relative; flex: 1; background: #222930; }
.drawing { position: absolute; inset: 0; width: 100%; height: 100%; }
.glow { stroke: #2458b8; stroke-width: 17; stroke-linecap: round; opacity: .7; }
.halo { stroke: #3c7cff; stroke-width: 9; stroke-linecap: round; opacity: .6; }
.core { stroke: #e4ecff; stroke-width: 2; }
.axisglow { stroke: #244f9c; stroke-width: 14; stroke-linecap: round; }
.axiscore { stroke: #b4bccb; stroke-width: 3; stroke-dasharray: 40 6 8 6; }
.tag { fill: #23509c; }
.tagline { fill: none; stroke: #10244a; stroke-width: 3; stroke-dasharray: 3 3; }
.ring { fill: #174a94; stroke: #16b4ff; stroke-width: 4; }

.viewcube { position: absolute; top: 33px; right: 6px; display: flex; flex-direction: column; align-items: center; gap: 5px; }
.viewcube text { text-anchor: middle; dominant-baseline: central; font-family: "Noto Sans CJK JP", sans-serif; }
.dir text { font-size: 12px; fill: #a2a6aa; }
.dir .near { font-size: 15px; font-weight: 500; }
.face-label text { font-size: 20px; fill: #42484f; font-weight: 500; }
.face-label .top { font-size: 15px; }
.wcs { gap: 6px; width: 45px; height: 18px; border-radius: 4px; background: #9b9cab; border: 1px solid #85869a; color: #5c5d69; font: 10px/14px "Liberation Sans", sans-serif; }

.command { border-top: 4px solid var(--panel); }
.history { height: 60px; padding: 12px 0 0; border: 1px solid #222831; border-width: 1px 0; background: #c8c8c8; color: #000; font: 12px/15px "DejaVu Sans Mono", "Noto Sans CJK JP", monospace; font-feature-settings: normal; }
.history p { margin: 0 0 15px; }
.history p:last-child { margin: 0; }
.command input { display: block; width: 100%; height: 20px; padding: 0 4px; border: 0; background: #fff; font: inherit; }

.rightrail { display: flex; padding: 5px 2px 4px 2px; }
.rightrail button { position: relative; flex: 1; background: var(--panel); color: #f0f1f2; }

/* layout tabs and status bar */
.footer { display: flex; justify-content: space-between; height: 32px; padding: 0 5px 0 19px; }
.layouts { display: flex; height: 24px; align-items: center; }
.layouts .menu { margin-right: 9px; }
.model {
  width: 63px; height: 24px; line-height: 24px; padding-top: 1px; text-align: center; background: var(--panel); color: #fff;
  clip-path: polygon(10px 0, 100% 0, calc(100% - 10px) 100%, 0 100%);
}
.sheet, .num { position: relative; width: 45px; height: 16px; text-align: center; margin-top: 2px; }
.sheet { padding-right: 4px; }
.sheet.three { width: 59px; }
.num { width: 37px; padding-right: 2px; }
.sheet::after, .num::after {
  content: ""; position: absolute; right: 0; top: 0; width: 1px; height: 16px;
  background: #4a5362; transform: skewX(-22deg);
}
.num.add { width: 44px; padding-right: 4px; }

.status { display: flex; gap: 3px; padding-top: 2px; height: 26px; }
.tight { display: flex; gap: 1px; }
.grp { display: flex; height: 24px; background: var(--panel); }
.grp button { width: 24px; height: 24px; border: 1px solid var(--panel); }
.grp button svg { width: 16px; height: 16px; }
.grp button.on { background: var(--active); }
.grp .dd { width: 16px; }
.grp .dd svg { width: 8px; height: 8px; }
.grp .space { width: 35px; }
.grp .scale { width: 28px; }
.grp.double button { width: 28px; }
```
